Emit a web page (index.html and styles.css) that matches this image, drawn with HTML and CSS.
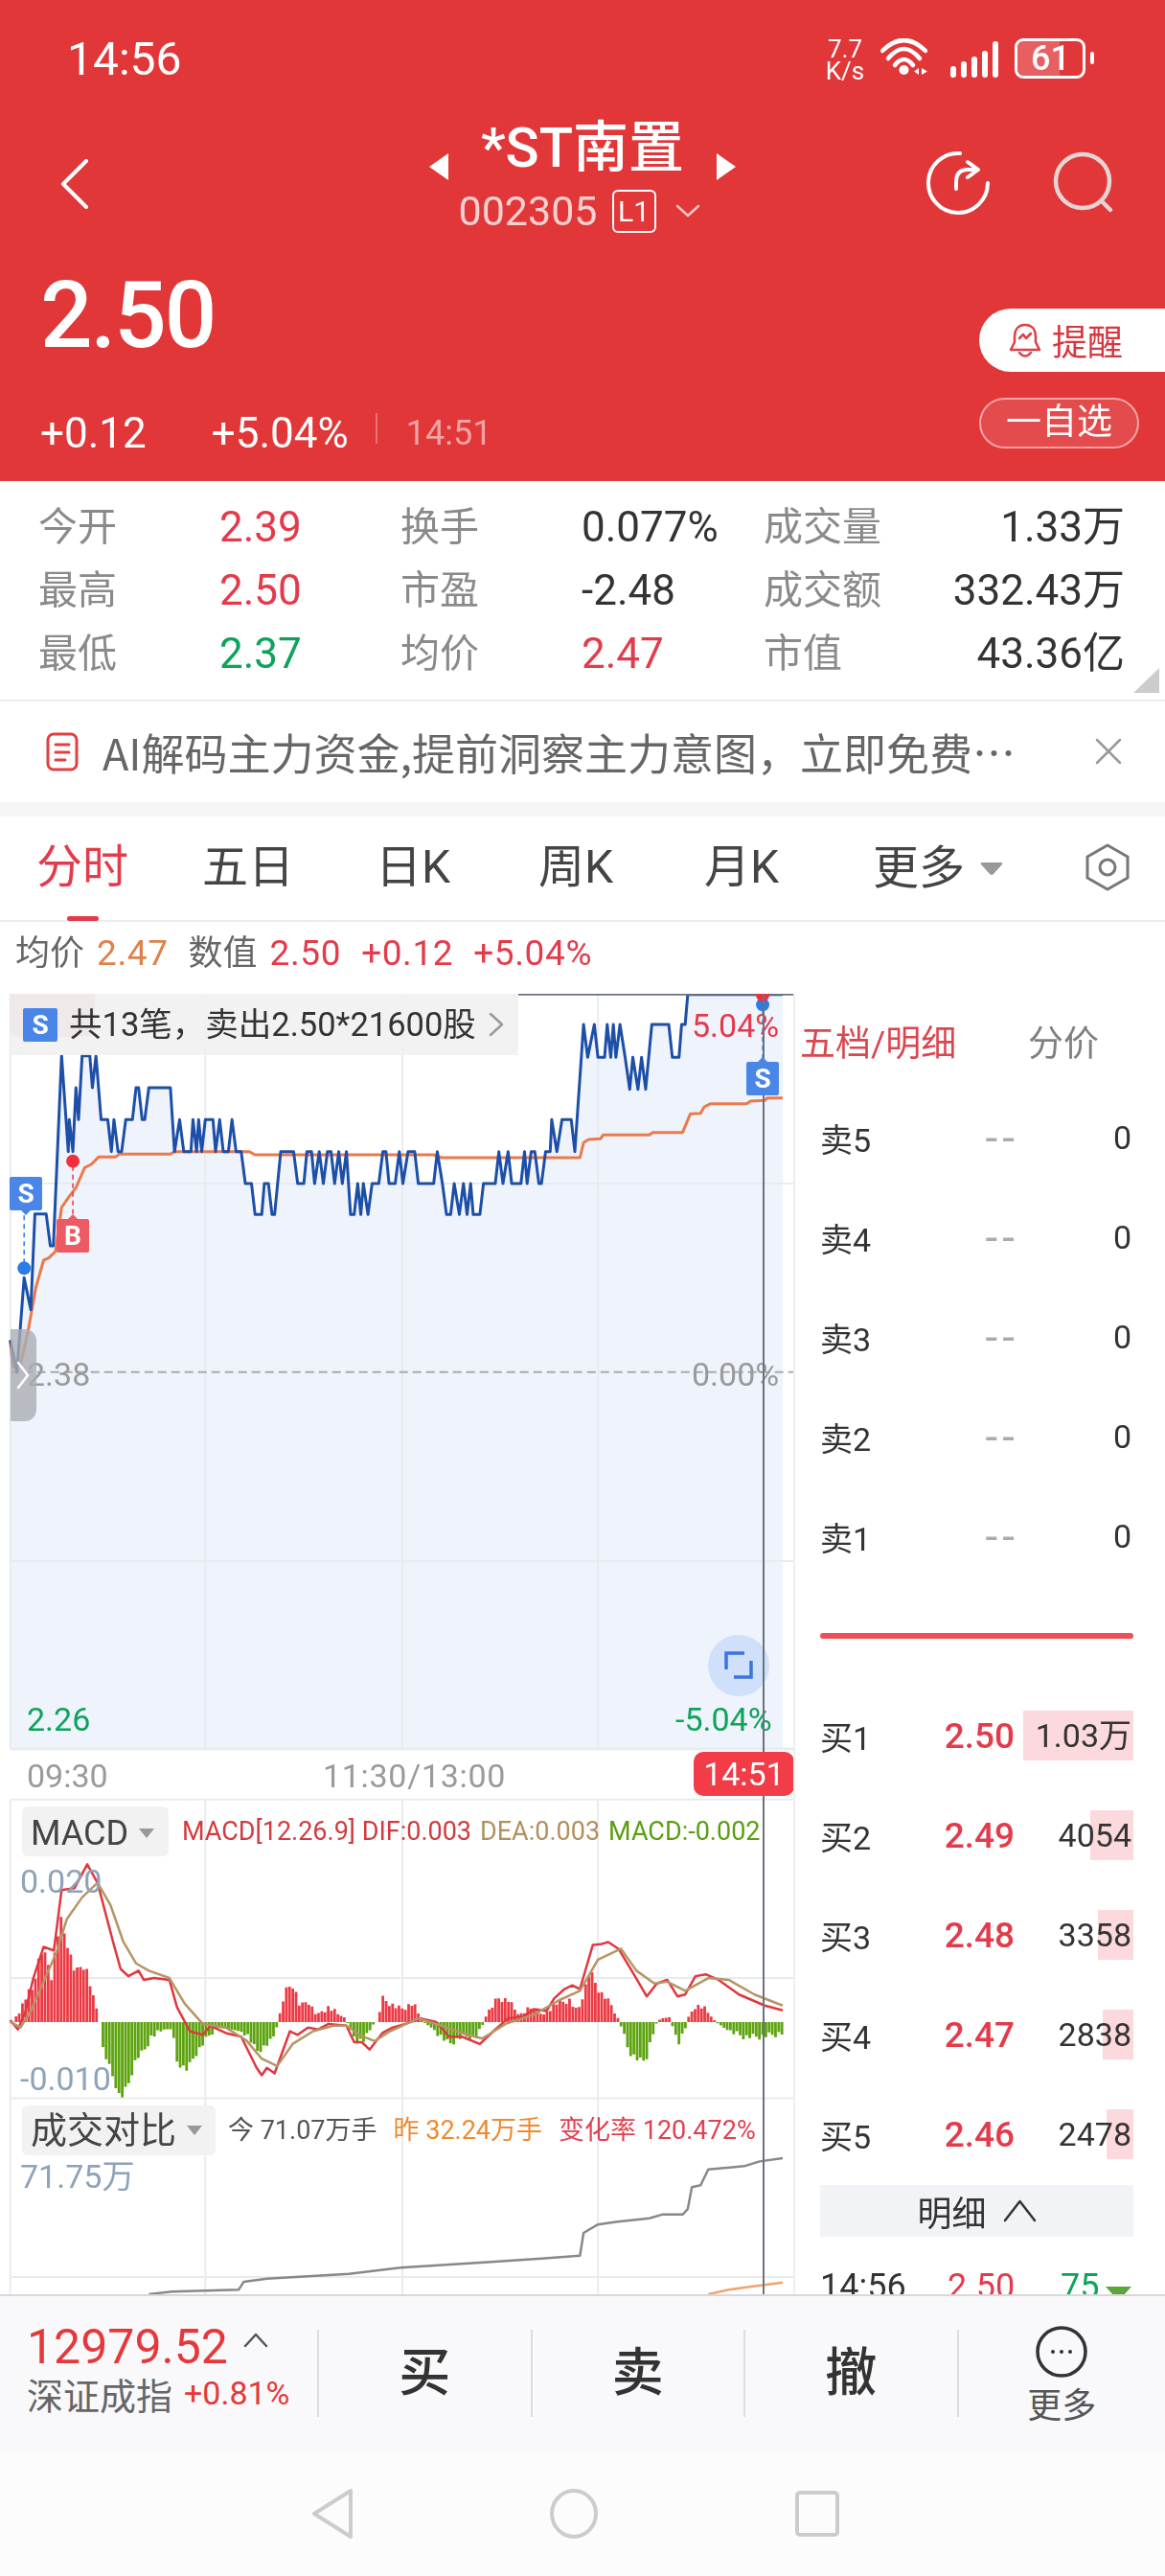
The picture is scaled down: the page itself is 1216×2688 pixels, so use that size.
FILE: index.html
```html
<!DOCTYPE html>
<html lang="zh-CN">
<head>
  <meta charset="UTF-8" />
  <meta name="viewport" content="width=device-width, initial-scale=1.0" />
  <title>*ST南置</title>
  <link rel="stylesheet" href="styles.css">
</head>
<body>
  <div class="page">
    <header class="top">
      <div class="status">
        <span class="clock">14:56</span>
        <div class="status-icons">
          <div class="speed"><span>7.7</span><span>K/s</span></div>
          <svg class="wifi" width="49" height="40" viewBox="0 0 49 40" fill="none" stroke="#fff" stroke-linecap="round">
            <path d="M2 13 Q24.500 -9 47 13" stroke-width="4.500"/>
            <path d="M8 21 Q24.500 1 41 21" stroke-width="4.500"/>
            <path d="M15 28 Q24.500 16 34 28" stroke-width="4.500"/>
            <circle cx="24.500" cy="33" r="5" fill="#fff" stroke="none"/>
            <path d="M40 31 L35 34.500 L40 38 Z M43 31 L49 34.500 L43 38 Z" fill="#fff" stroke="none"/>
          </svg>
          <div class="signal">
            <i class="s1"></i><i class="s2"></i><i class="s3"></i><i class="s4"></i><i class="s5"></i>
          </div>
          <div class="battery"><div class="battery-fill"></div><span>61</span></div>
          <div class="battery-cap"></div>
        </div>
      </div>

      <div class="titlebar">
        <svg class="back" width="30" height="52" viewBox="0 0 30 52" fill="none" stroke="#fff" stroke-width="4" stroke-linecap="round" stroke-linejoin="round">
          <path d="M27 2 L3 26 L27 50"/>
        </svg>
        <div class="title-block">
          <div class="title-line">
            <svg class="arrow" width="20" height="28" viewBox="0 0 20 28" fill="#fff"><path d="M20 0 V28 L0 14 Z"/></svg>
            <span class="name">*ST南置</span>
            <svg class="arrow" width="20" height="28" viewBox="0 0 20 28" fill="#fff"><path d="M0 0 V28 L20 14 Z"/></svg>
          </div>
          <div class="code-line">
            <span class="code">002305</span>
            <span class="level">L1</span>
            <svg width="26" height="14" viewBox="0 0 26 14" fill="none" stroke="#f5c4c4" stroke-width="2.500" stroke-linecap="round" stroke-linejoin="round"><path d="M2 2 L13 12 L24 2"/></svg>
          </div>
        </div>
        <div class="title-tools">
          <svg width="68" height="68" viewBox="0 0 68 68" fill="none" stroke="#fff" stroke-width="4" stroke-linecap="round" stroke-linejoin="round">
            <path d="M36 3 A31 31 0 1 0 65 34"/>
            <path d="M32 40 V33 Q32 20 44 20 L54 20"/>
            <path d="M44 12 L55 20 L44 28"/>
          </svg>
          <svg width="68" height="68" viewBox="0 0 68 68" fill="none" stroke="#e6d3d3" stroke-width="4.500" stroke-linecap="round">
            <circle cx="32" cy="32" r="28"/>
            <path d="M52 53 L61 62"/>
          </svg>
        </div>
      </div>

      <div class="quote">
        <div class="quote-left">
          <div class="price">2.50</div>
          <div class="change">
            <span class="change-abs">+0.12</span>
            <span class="change-pct">+5.04%</span>
            <span class="change-time">14:51</span>
          </div>
        </div>
        <div class="quote-right">
          <div class="remind">
            <svg width="34" height="37" viewBox="0 0 34 37" fill="none" stroke="#dc3f45" stroke-width="2.500" stroke-linecap="round" stroke-linejoin="round">
              <path d="M17 2 C9 2 6 8 6 14 V20 L2 28 H32 L28 20 V14 C28 8 25 2 17 2 Z"/>
              <path d="M11 31 Q17 38 23 31"/>
              <path d="M11 16 L15 12 L18 16 L23 11"/>
            </svg>
            <span>提醒</span>
          </div>
          <div class="watch">一自选</div>
        </div>
      </div>
    </header>

    <section class="stats">
      <span class="stat-label">今开</span><span class="stat-val up">2.39</span>
      <span class="stat-label">换手</span><span class="stat-val">0.077%</span>
      <span class="stat-label">成交量</span><span class="stat-val end">1.33万</span>
      <span class="stat-label">最高</span><span class="stat-val up">2.50</span>
      <span class="stat-label">市盈</span><span class="stat-val">-2.48</span>
      <span class="stat-label">成交额</span><span class="stat-val end">332.43万</span>
      <span class="stat-label">最低</span><span class="stat-val down">2.37</span>
      <span class="stat-label">均价</span><span class="stat-val up">2.47</span>
      <span class="stat-label">市值</span><span class="stat-val end">43.36亿</span>
      <div class="stats-corner"></div>
    </section>

    <section class="banner">
      <svg width="34" height="41" viewBox="0 0 34 41" fill="none" stroke="#e2403f" stroke-width="3" stroke-linecap="round">
        <rect x="2" y="2" width="30" height="37" rx="6"/>
        <path d="M10 13 H24 M10 21 H24 M10 29 H20"/>
      </svg>
      <span class="banner-text">AI解码主力资金,提前洞察主力意图，立即免费…</span>
      <svg class="banner-close" width="30" height="30" viewBox="0 0 30 30" fill="none" stroke="#999" stroke-width="2.500" stroke-linecap="round">
        <path d="M3 3 L27 27 M27 3 L3 27"/>
      </svg>
    </section>

    <nav class="tabs">
      <a class="tab tab-on">分时</a>
      <a class="tab">五日</a>
      <a class="tab">日K</a>
      <a class="tab">周K</a>
      <a class="tab">月K</a>
      <div class="tab-more">
        <a class="tab">更多</a>
        <svg width="24" height="15" viewBox="0 0 24 15" fill="#999"><path d="M2 1 H22 Q24 1 23 3 L14 13 Q12 15 10 13 L1 3 Q0 1 2 1 Z"/></svg>
        <svg class="tab-gear" width="46" height="50" viewBox="0 0 46 50" fill="none" stroke="#777" stroke-width="3" stroke-linejoin="round">
          <path d="M23 2 L44 14 V36 L23 48 L2 36 V14 Z"/>
          <circle cx="23" cy="25" r="8"/>
        </svg>
      </div>
    </nav>

    <div class="info">
      <span class="info-label">均价</span><span class="info-num info-avg">2.47</span>
      <span class="info-label info-gap">数值</span><span class="info-num up">2.50</span>
      <span class="info-num up info-gap">+0.12</span><span class="info-num up info-gap">+5.04%</span>
    </div>

    <main class="board">
      <div class="chart">
        <svg class="chart-lines" viewBox="0 111 1547.47 4071" preserveAspectRatio="none">
          <polygon id="priceFill" class="price-fill"></polygon>
          <g class="grid">
            <path d="M400 111 V2475 M784 111 V2475 M1165 111 V2475"/>
            <path d="M20 705 H1548 M20 1887 H1548"/>
            <path class="grid-mid" d="M20 1295 H1548"/>
            <path class="grid-base" d="M20 2475 H1548"/>
            <path d="M20 111 V2475 M1548 111 V2475"/>
          </g>
          <polyline id="avgLine" class="line line-avg"></polyline>
          <polyline id="priceLine" class="line line-price"></polyline>
          <path class="line line-top" d="M1010 113 H1548"/>
          <path class="tick tick-blue" d="M47 805 V955"/>
          <path class="tick tick-red" d="M142 650 V800"/>
          <path class="tick tick-blue" d="M1486 165 V325"/>
          <ellipse cx="47" cy="970" rx="13" ry="21" fill="#2b7be8"/>
          <ellipse cx="142" cy="635" rx="13" ry="21" fill="#f0303f"/>
          <ellipse cx="1486" cy="145" rx="13" ry="21" fill="#2b7be8"/>
          <ellipse cx="1486" cy="115" rx="13" ry="21" fill="#f0303f"/>

          <g transform="translate(0 2400) scale(1 1.148)">
            <g class="grid">
              <path d="M400 205 V1700 M784 205 V1700 M1165 205 V1700 M20 205 V1700 M1548 205 V1700"/>
              <path d="M20 203 H1548 M20 690 H1548 M20 1018 H1548 M20 1505 H1548"/>
            </g>
            <path id="barsUp" class="bars bars-up"></path>
            <path id="barsDown" class="bars bars-down"></path>
            <polyline id="difLine" class="line line-dif"></polyline>
            <polyline id="deaLine" class="line line-dea"></polyline>
            <polyline id="volLine" class="line line-vol"></polyline>
            <polyline id="volPrev" class="line line-prev"></polyline>
          </g>
        </svg>

        <div class="tip-shade"></div>
        <div class="tip">
          <span class="tip-s">S</span>
          <span class="tip-text">共13笔，卖出2.50*21600股</span>
          <svg width="16" height="26" viewBox="0 0 16 26" fill="none" stroke="#999" stroke-width="2.500" stroke-linecap="round" stroke-linejoin="round"><path d="M2 2 L14 13 L2 24"/></svg>
        </div>

        <span class="lab lab-pct lab-top up">5.04%</span>
        <span class="lab lab-left lab-mid muted">2.38</span>
        <span class="lab lab-pct lab-mid muted">0.00%</span>
        <span class="lab lab-left lab-low down">2.26</span>
        <span class="lab lab-pct-wide lab-low down">-5.04%</span>
        <span class="lab lab-left lab-time muted">09:30</span>
        <span class="lab lab-noon lab-time muted">11:30/13:00</span>

        <div class="handle">
          <svg width="14" height="30" viewBox="0 0 14 30" fill="none" stroke="#fff" stroke-width="2.500" stroke-linecap="round" stroke-linejoin="round"><path d="M2 2 L12 15 L2 28"/></svg>
        </div>
        <div class="expand">
          <svg width="32" height="30" viewBox="0 0 32 30" fill="none" stroke="#3b74e0" stroke-width="3.500"><path d="M22 2 H3 V19 M29 10 V27 H11"/></svg>
        </div>

        <div class="cross"></div>
        <span class="mark mark-s mark-left">S</span>
        <span class="mark mark-b mark-buy">B</span>
        <span class="mark mark-s mark-right">S</span>
        <div class="time-badge">14:51</div>

        <div class="pick pick-macd">MACD<i class="pick-tri"></i></div>
        <div class="legend legend-macd">
          <span class="c-dif">MACD[12.26.9] DIF:0.003</span>
          <span class="c-dea">DEA:0.003</span>
          <span class="c-bar">MACD:-0.002</span>
        </div>
        <span class="lab lab-axis lab-macd-hi">0.020</span>
        <span class="lab lab-axis lab-macd-lo">-0.010</span>

        <div class="pick pick-vol">成交对比<i class="pick-tri"></i></div>
        <div class="legend legend-vol">
          <span class="c-today">今 71.07万手</span>
          <span class="c-prev">昨 32.24万手</span>
          <span class="c-rate">变化率 120.472%</span>
        </div>
        <span class="lab lab-axis lab-vol-hi">71.75万</span>
      </div>

      <aside class="depth">
        <div class="depth-head"><span class="depth-on">五档/明细</span><span class="depth-off">分价</span></div>
        <div class="row"><span>卖5</span><span class="dash">--</span><span class="vol">0</span></div>
        <div class="row"><span>卖4</span><span class="dash">--</span><span class="vol">0</span></div>
        <div class="row"><span>卖3</span><span class="dash">--</span><span class="vol">0</span></div>
        <div class="row"><span>卖2</span><span class="dash">--</span><span class="vol">0</span></div>
        <div class="row"><span>卖1</span><span class="dash">--</span><span class="vol">0</span></div>
        <div class="row-line"><div></div></div>
        <div class="row"><span>买1</span><span class="bid up">2.50</span><span class="vol"><i class="vol-bar" style="width:100%"></i><b>1.03万</b></span></div>
        <div class="row"><span>买2</span><span class="bid up">2.49</span><span class="vol"><i class="vol-bar" style="width:39%"></i><b>4054</b></span></div>
        <div class="row"><span>买3</span><span class="bid up">2.48</span><span class="vol"><i class="vol-bar" style="width:32%"></i><b>3358</b></span></div>
        <div class="row"><span>买4</span><span class="bid up">2.47</span><span class="vol"><i class="vol-bar" style="width:28%"></i><b>2838</b></span></div>
        <div class="row"><span>买5</span><span class="bid up">2.46</span><span class="vol"><i class="vol-bar" style="width:24%"></i><b>2478</b></span></div>
        <div class="detail-btn">
          <span>明细</span>
          <svg width="35" height="24" viewBox="0 0 35 24" fill="none" stroke="#333" stroke-width="2.500" stroke-linecap="round" stroke-linejoin="round"><path d="M2 22 L17.500 2 L33 22"/></svg>
        </div>
        <div class="tick-row">
          <span>14:56</span><span class="up">2.50</span><span class="down">75</span>
          <svg width="27" height="15" viewBox="0 0 27 15" fill="#5aa63c"><path d="M0 0 H27 L13.500 15 Z"/></svg>
        </div>
      </aside>
    </main>

    <footer class="bottom">
      <div class="index">
        <div class="index-top">
          <span class="index-val">12979.52</span>
          <svg width="26" height="16" viewBox="0 0 26 16" fill="none" stroke="#555" stroke-width="2.500" stroke-linecap="round" stroke-linejoin="round"><path d="M2 14 L13 2 L24 14"/></svg>
        </div>
        <div class="index-sub"><span class="index-name">深证成指</span><span class="index-pct">+0.81%</span></div>
      </div>
      <div class="action">买</div>
      <div class="action">卖</div>
      <div class="action">撤</div>
      <div class="more">
        <svg width="54" height="54" viewBox="0 0 54 54" fill="none" stroke="#333" stroke-width="3.500">
          <circle cx="27" cy="27" r="25"/>
          <circle cx="18" cy="27" r="2" fill="#333" stroke="none"/>
          <circle cx="27" cy="27" r="2" fill="#333" stroke="none"/>
          <circle cx="36" cy="27" r="2" fill="#333" stroke="none"/>
        </svg>
        <span>更多</span>
      </div>
    </footer>

    <div class="navbar">
      <svg width="42" height="52" viewBox="0 0 42 52" fill="none" stroke="#ccc" stroke-width="4" stroke-linejoin="round"><path d="M40 2 V50 L2 26 Z"/></svg>
      <svg width="50" height="52" viewBox="0 0 50 52" fill="none" stroke="#ccc" stroke-width="4"><ellipse cx="25" cy="26" rx="23" ry="24"/></svg>
      <svg width="46" height="48" viewBox="0 0 46 48" fill="none" stroke="#ccc" stroke-width="4"><rect x="2" y="2" width="42" height="44" rx="3"/></svg>
    </div>
  </div>

  <script src="chart.js"></script>
</body>
</html>
```

FILE: styles.css
```css
* {
  box-sizing: border-box;
  margin: 0;
  padding: 0;
}

body {
  background-color: #fff;
  font-family: Roboto, "Noto Sans CJK SC", sans-serif;
  color: #333;
}

svg {
  display: block;
  flex: none;
}

.page {
  width: 1216px;
  height: 2688px;
  overflow: hidden;
  display: flex;
  flex-direction: column;
}

.up { color: #e33b4b; }
.down { color: #0fa35a; }
.muted { color: #9a9a9a; }

/* red header */
.top {
  height: 502px;
  flex: none;
  background-color: #e13739;
  color: #fff;
}

.status {
  height: 124px;
  display: flex;
  justify-content: space-between;
  align-items: center;
  padding: 0 74px 0 70px;
}

.clock {
  font-size: 48px;
  line-height: 60px;
}

.status-icons {
  display: flex;
  align-items: flex-start;
  height: 44px;
}

.speed {
  display: flex;
  flex-direction: column;
  align-items: center;
  width: 40px;
  font-size: 26px;
  line-height: 23px;
  margin-right: 17px;
}

.wifi {
  margin-right: 24px;
}

.signal {
  display: flex;
  align-items: flex-end;
  gap: 5px;
  height: 39px;
  margin-top: 2px;
  margin-right: 17px;
}

.signal i {
  display: block;
  width: 6px;
  border-radius: 3px;
  background-color: #fff;
}

.s1 { height: 12px; }
.s2 { height: 17px; }
.s3 { height: 22px; }
.s4 { height: 28px; }
.s5 { height: 38px; }

.battery {
  position: relative;
  width: 74px;
  height: 42px;
  border: 3px solid #fff;
  border-radius: 9px;
  display: flex;
  align-items: center;
  overflow: hidden;
}

.battery span {
  position: relative;
  margin-left: 14px;
  font-size: 36px;
  font-weight: 500;
  line-height: 36px;
}

.battery-fill {
  position: absolute;
  left: 0;
  top: 0;
  bottom: 0;
  width: 65%;
  background-color: rgba(255, 255, 255, 0.2);
}

.battery-cap {
  width: 4px;
  height: 13px;
  margin: 14px 0 0 5px;
  border-radius: 2px;
  background-color: #fff;
}

.titlebar {
  position: relative;
  height: 128px;
  display: flex;
  justify-content: center;
}

.back {
  position: absolute;
  left: 63px;
  top: 42px;
}

.title-block {
  display: flex;
  flex-direction: column;
  align-items: center;
}

.title-line {
  display: flex;
  gap: 34px;
  height: 60px;
}

.title-line .arrow {
  align-self: flex-end;
  margin-bottom: -4px;
}

.name {
  font-size: 58px;
  line-height: 60px;
  font-weight: 500;
}

.code-line {
  display: flex;
  align-items: center;
  height: 48px;
  margin-top: 12px;
  margin-right: 7px;
}

.code {
  font-size: 43px;
  line-height: 48px;
  color: #f8d0d0;
}

.level {
  width: 46px;
  height: 45px;
  margin: 0 20px 0 15px;
  border: 2px solid #fff;
  border-radius: 6px;
  font-size: 30px;
  line-height: 41px;
  text-align: center;
}

.title-tools {
  position: absolute;
  left: 966px;
  top: 33px;
  display: flex;
  gap: 64px;
}

.quote {
  height: 250px;
  display: flex;
  justify-content: space-between;
}

.quote-left {
  padding: 32px 0 0 42px;
}

.price {
  font-size: 96px;
  line-height: 90px;
  font-weight: 500;
  letter-spacing: -2px;
}

.change {
  display: flex;
  align-items: center;
  height: 50px;
  margin-top: 53px;
  font-size: 44px;
  line-height: 50px;
}

.change-pct {
  margin-left: 68px;
  padding-right: 30px;
  margin-right: 30px;
  position: relative;
}

.change-pct::after {
  content: "";
  position: absolute;
  right: 0;
  top: 4px;
  height: 32px;
  width: 2px;
  background-color: rgba(255, 255, 255, 0.3);
}

.change-time {
  font-size: 36px;
  color: #f4a3a3;
}

.quote-right {
  width: 194px;
  padding-top: 70px;
}

.remind {
  height: 66px;
  padding-left: 31px;
  display: flex;
  align-items: center;
  gap: 11px;
  background-color: #fff;
  border-radius: 33px 0 0 33px;
  color: #d8363e;
  font-size: 37px;
}

.watch {
  width: 167px;
  height: 53px;
  margin-top: 27px;
  border: 2px solid rgba(255, 255, 255, 0.5);
  border-radius: 27px;
  background-color: rgba(255, 255, 255, 0.1);
  font-size: 37px;
  line-height: 47px;
  text-align: center;
}

/* quote numbers */
.stats {
  position: relative;
  height: 230px;
  flex: none;
  padding: 15px 42px 0 40px;
  border-bottom: 2px solid #ececec;
  display: grid;
  grid-template-columns: 189px 189px 189px 190px 1fr auto;
  grid-template-rows: 66px 66px 66px;
  align-items: center;
}

.stat-label {
  font-size: 41px;
  line-height: 50px;
  color: #8a8a8a;
}

.stat-val {
  font-size: 44px;
  line-height: 50px;
}

.stat-val.end {
  text-align: right;
  color: #333;
}

.stats-corner {
  position: absolute;
  right: 6px;
  bottom: 7px;
  border-left: 27px solid transparent;
  border-bottom: 26px solid #ccc;
}

.banner {
  position: relative;
  height: 105px;
  flex: none;
  display: flex;
  align-items: center;
  padding-left: 48px;
}

.banner-text {
  margin-left: 25px;
  font-family: "Noto Sans CJK SC", sans-serif;
  font-size: 45px;
  line-height: 56px;
  color: #666;
  white-space: nowrap;
}

.banner-close {
  position: absolute;
  left: 1142px;
  top: 37px;
}

/* chart tabs */
.tabs {
  height: 110px;
  flex: none;
  margin-top: 15px;
  border-bottom: 2px solid #ececec;
  padding-left: 38px;
  display: grid;
  grid-template-columns: 173px 181px 170px 173px 176px 1fr;
  position: relative;
}

.tabs::before {
  content: "";
  position: absolute;
  left: 0;
  right: 0;
  top: -15px;
  height: 15px;
  background-color: #f5f5f6;
}

.tab {
  font-size: 48px;
  line-height: 106px;
  color: #444;
}

.tab-on {
  position: relative;
  color: #e33b4b;
}

.tab-on::after {
  content: "";
  position: absolute;
  left: 32px;
  bottom: -1px;
  width: 33px;
  height: 5px;
  border-radius: 3px;
  background-color: #e33b4b;
}

.tab-more {
  display: flex;
  align-items: center;
  gap: 16px;
  padding-right: 37px;
}

.tab-gear {
  margin-left: auto;
  margin-top: -2px;
}

.info {
  height: 75px;
  flex: none;
  padding: 0 0 9px 16px;
  display: flex;
  align-items: center;
  font-size: 36px;
  line-height: 44px;
}

.info-label {
  color: #666;
  margin-right: 13px;
}

.info-num {
  font-size: 37px;
  letter-spacing: 0.6px;
}

.info-avg {
  color: #df824a;
}

.info-gap {
  margin-left: 21px;
}

/* chart column and order book */
.board {
  height: 1357px;
  flex: none;
  display: flex;
}

.chart {
  position: relative;
  width: 829px;
  height: 1357px;
  flex: none;
  overflow: hidden;
}

.chart-lines {
  position: absolute;
  left: 0;
  top: 0;
  width: 829px;
  height: 1357px;
}

.price-fill { fill: #eef3fc; }

.grid path {
  fill: none;
  stroke: #e8ebf0;
  stroke-width: 2px;
  vector-effect: non-scaling-stroke;
}

.grid .grid-mid {
  stroke: #aaa;
  stroke-dasharray: 9 5;
}

.grid .grid-base {
  stroke-width: 3px;
}

.line {
  fill: none;
  stroke-linejoin: round;
  vector-effect: non-scaling-stroke;
}

.line-price { stroke: #1d4fa8; stroke-width: 3px; }
.line-avg { stroke: #ea7a4c; stroke-width: 3px; }
.line-top { stroke: #6b7280; stroke-width: 2px; }
.line-dif { stroke: #e1373f; stroke-width: 2.5px; }
.line-dea { stroke: #b59565; stroke-width: 2.5px; }
.line-vol { stroke: #888; stroke-width: 2.5px; }
.line-prev { stroke: #f0a46a; stroke-width: 2.5px; }

.tick {
  fill: none;
  stroke-width: 1.5px;
  stroke-dasharray: 5 4;
  vector-effect: non-scaling-stroke;
}

.tick-blue { stroke: #2b7be8; }
.tick-red { stroke: #f0303f; }

.bars {
  fill: none;
  stroke-width: 2.8px;
  vector-effect: non-scaling-stroke;
}

.bars-up { stroke: #ec3a44; }
.bars-down { stroke: #5da30f; }

.tip-shade {
  position: absolute;
  left: 11px;
  top: 0;
  width: 88px;
  height: 45px;
  border-radius: 0 0 8px 8px;
  background-color: #e9b7b7;
}

.tip {
  position: absolute;
  left: 11px;
  top: 0;
  width: 530px;
  height: 64px;
  padding-left: 13px;
  display: flex;
  align-items: center;
  background-color: rgba(240, 240, 240, 0.88);
}

.tip-s {
  width: 36px;
  height: 35px;
  margin-right: 12px;
  border-radius: 2px;
  background-color: #4a86e8;
  color: #fff;
  font-size: 28px;
  font-weight: 700;
  line-height: 35px;
  text-align: center;
}

.tip-text {
  font-size: 34.5px;
  line-height: 44px;
  white-space: nowrap;
  color: #333;
}

.tip svg {
  margin-left: 13px;
}

.lab {
  position: absolute;
  font-size: 34px;
  line-height: 40px;
  white-space: nowrap;
}

.lab-left { left: 28px; }
.lab-pct { left: 722px; }
.lab-pct-wide { left: 705px; }
.lab-top { top: 13px; }
.lab-mid { top: 377px; }
.lab-low { top: 737px; }
.lab-time { top: 796px; }
.lab-noon { left: 337px; letter-spacing: 0.7px; }

.lab-axis {
  left: 21px;
  color: #8ea3b8;
}

.lab-macd-hi { top: 906px; }
.lab-macd-lo { top: 1112px; }
.lab-vol-hi { top: 1214px; }

.handle {
  position: absolute;
  left: 11px;
  top: 350px;
  width: 27px;
  height: 96px;
  padding-left: 6px;
  display: flex;
  align-items: center;
  border-radius: 0 12px 12px 0;
  background-color: rgba(170, 172, 178, 0.8);
}

.expand {
  position: absolute;
  left: 739px;
  top: 669px;
  width: 64px;
  height: 64px;
  display: flex;
  align-items: center;
  justify-content: center;
  border-radius: 50%;
  background-color: #d0dffa;
}

.cross {
  position: absolute;
  left: 796px;
  top: 0;
  bottom: 0;
  width: 2px;
  background-color: #6b7280;
}

.mark {
  position: absolute;
  width: 34px;
  height: 35px;
  border-radius: 2px;
  color: #fff;
  font-size: 28px;
  font-weight: 700;
  line-height: 35px;
  text-align: center;
}

.mark::after {
  content: "";
  position: absolute;
  left: 12px;
  border-left: 5px solid transparent;
  border-right: 5px solid transparent;
}

.mark-s { background-color: #4a86e8; }
.mark-b { background-color: #ee5a63; }

.mark-left {
  left: 10px;
  top: 191px;
}

.mark-left::after {
  top: 35px;
  border-top: 5px solid #4a86e8;
}

.mark-buy {
  left: 59px;
  top: 235px;
}

.mark-buy::after {
  top: -5px;
  border-bottom: 5px solid #ee5a63;
}

.mark-right {
  left: 779px;
  top: 71px;
}

.mark-right::after {
  top: -5px;
  border-bottom: 5px solid #4a86e8;
}

.time-badge {
  position: absolute;
  left: 724px;
  top: 791px;
  width: 105px;
  height: 46px;
  border-radius: 10px;
  background-color: #f23c48;
  color: #fff;
  font-size: 34px;
  line-height: 46px;
  text-align: center;
}

.pick {
  position: absolute;
  left: 23px;
  height: 52px;
  padding-left: 9px;
  display: flex;
  align-items: center;
  border-radius: 6px;
  background-color: #f2f2f2;
  color: #444;
  line-height: 52px;
}

.pick-macd {
  top: 848px;
  width: 153px;
  padding-top: 3px;
  font-size: 36px;
}

.pick-vol {
  top: 1160px;
  width: 202px;
  font-size: 38px;
}

.pick-tri {
  margin-left: 11px;
  border-left: 8px solid transparent;
  border-right: 8px solid transparent;
  border-top: 10px solid #999;
}

.legend {
  position: absolute;
  display: flex;
  line-height: 40px;
  white-space: nowrap;
}

.legend-macd {
  left: 190px;
  top: 854px;
  gap: 9px;
  font-size: 27px;
}

.legend-vol {
  left: 238px;
  top: 1166px;
  gap: 17px;
  font-size: 27px;
}

.c-dif { color: #d13a3f; }
.c-dea { color: #b09060; }
.c-bar { color: #5a9e10; }
.c-today { color: #555; }
.c-prev { color: #ee8a30; }
.c-rate { color: #e04050; }

.depth {
  flex: 1;
  min-width: 0;
  margin-left: -1px;
  padding: 0 33px 0 26px;
  border-left: 2px solid #eee;
  position: relative;
  background-color: #fff;
  font-size: 34px;
}

.depth-head {
  height: 98px;
  margin-left: -21px;
  display: flex;
  align-items: center;
  font-size: 37px;
}

.depth-on {
  color: #d9474f;
  width: 238px;
}

.depth-off {
  color: #808080;
}

.row {
  height: 104px;
  display: grid;
  grid-template-columns: 1fr auto 115px;
  column-gap: 9px;
  align-items: center;
  color: #333;
}

.dash {
  color: #aaa;
  font-size: 46px;
  letter-spacing: 5px;
  line-height: 52px;
  margin-right: -5px;
}

.bid {
  font-size: 37px;
  font-weight: 500;
}

.vol {
  position: relative;
  height: 52px;
  padding-right: 2px;
  text-align: right;
  line-height: 52px;
}

.vol b {
  position: relative;
  font-weight: 400;
}

.vol-bar {
  position: absolute;
  right: 0;
  top: 0;
  height: 52px;
  background-color: #fbd9dc;
  mix-blend-mode: multiply;
}

.row-line {
  height: 104px;
  display: flex;
  align-items: center;
}

.row-line div {
  width: 100%;
  height: 6px;
  border-radius: 3px;
  background-color: #ef4f55;
}

.detail-btn {
  height: 54px;
  margin-top: 1px;
  display: flex;
  align-items: center;
  justify-content: center;
  gap: 17px;
  background-color: #f2f3f7;
  font-size: 36px;
}

.tick-row {
  height: 52px;
  margin-top: 26px;
  display: grid;
  grid-template-columns: 133px 118px 47px 1fr;
  align-items: center;
  font-size: 36px;
  color: #333;
}

.tick-row svg {
  margin-top: 14px;
}

/* bottom trade bar */
.bottom {
  height: 164px;
  flex: none;
  padding-top: 35px;
  border-top: 2px solid #d8d8d8;
  background-color: #f9f9fc;
  display: flex;
  position: relative;
}

.index {
  width: 331px;
  height: 91px;
  padding-left: 28px;
}

.index-top {
  display: flex;
  align-items: center;
  height: 44px;
  margin-top: -4px;
}

.index-val {
  font-size: 50px;
  line-height: 44px;
  color: #e6383a;
}

.index-top svg {
  margin: -14px 0 0 16px;
}

.index-sub {
  display: flex;
  align-items: center;
  height: 44px;
  margin-top: 4px;
}

.index-name {
  font-size: 38px;
  color: #666;
}

.index-pct {
  margin-left: 12px;
  font-size: 34px;
  color: #e6383a;
}

.action {
  width: 222.5px;
  height: 91px;
  border-left: 2px solid #ddd;
  font-size: 54px;
  font-weight: 500;
  line-height: 91px;
  text-align: center;
  color: #333;
}

.more {
  flex: 1;
  height: 91px;
  border-left: 2px solid #ddd;
  display: flex;
  flex-direction: column;
  align-items: center;
}

.more svg {
  margin-top: -4px;
}

.more span {
  margin-top: 10px;
  font-size: 36px;
  line-height: 40px;
  color: #555;
}

.navbar {
  height: 130px;
  flex: none;
  background-color: #fcfcfc;
  display: flex;
  align-items: center;
  justify-content: center;
  gap: 206px;
  padding-right: 14px;
}
```

FILE: chart.js
```js
// all coordinates are chart units: 1568 across per 840px, 3 per 1px down

const price = [[20,1195],[33,1295],[47,1000],[60,1100],[68,800],[90,800],[98,900],[104,900],[120,305],[133,605],[135,505],[142,605],[148,405],[153,505],[160,305],[175,305],[180,405],[187,305],[197,505],[210,505],[217,605],[222,505],[230,605],[237,605],[245,505],[258,505],[265,405],[270,405],[277,505],[282,505],[290,405],[332,405],[340,605],[350,505],[358,605],[372,605],[376,505],[383,605],[387,505],[393,605],[400,505],[415,505],[420,605],[428,505],[435,605],[445,605],[452,505],[460,605],[470,605],[478,705],[490,705],[497,802],[510,802],[515,705],[523,705],[530,802],[535,802],[547,605],[572,605],[580,705],[592,705],[598,605],[607,605],[613,705],[622,605],[630,705],[638,605],[645,605],[652,705],[660,605],[667,705],[675,605],[683,802],[690,802],[697,705],[703,802],[708,705],[717,802],[725,705],[738,705],[746,605],[752,605],[758,705],[770,705],[778,605],[785,705],[795,605],[808,605],[815,705],[845,705],[852,605],[862,705],[870,802],[878,802],[885,705],[895,802],[903,705],[910,802],[917,705],[922,802],[935,802],[942,705],[965,705],[972,605],[980,705],[990,605],[997,705],[1015,705],[1022,605],[1027,705],[1035,605],[1042,605],[1050,705],[1055,705],[1063,605],[1072,605],[1075,505],[1085,605],[1095,505],[1113,505],[1120,605],[1137,207],[1145,310],[1158,207],[1165,310],[1178,310],[1183,207],[1190,310],[1195,207],[1200,310],[1208,207],[1218,310],[1227,410],[1233,310],[1243,410],[1250,310],[1258,410],[1270,207],[1303,207],[1310,310],[1323,310],[1328,207],[1335,207],[1340,113],[1525,113]];

const avg = [[20,1195],[25,1280],[40,1270],[55,1165],[70,1030],[85,945],[95,938],[108,918],[120,780],[135,745],[148,718],[165,655],[178,645],[192,622],[225,622],[232,613],[332,613],[340,605],[485,605],[497,615],[845,615],[860,624],[1130,624],[1137,577],[1147,567],[1170,565],[1175,553],[1265,553],[1272,545],[1330,545],[1345,487],[1365,485],[1372,465],[1385,455],[1455,455],[1462,447],[1490,445],[1495,437],[1525,437]];

const dif = [[20,805],[35,830],[50,780],[65,690],[85,605],[105,615],[120,450],[145,445],[170,380],[190,430],[205,510],[220,590],[235,665],[250,685],[270,670],[280,695],[300,690],[330,695],[345,770],[370,835],[395,845],[410,820],[440,840],[470,850],[500,935],[510,955],[520,935],[535,950],[565,835],[580,845],[600,825],[620,830],[640,815],[675,820],[690,865],[705,865],[720,885],[745,840],[765,825],[790,815],[820,800],[850,810],[875,850],[900,850],[935,870],[965,830],[990,800],[1020,795],[1040,775],[1065,780],[1080,745],[1100,720],[1115,710],[1130,720],[1155,600],[1170,598],[1185,592],[1205,610],[1235,680],[1260,740],[1280,705],[1300,695],[1320,740],[1335,735],[1355,685],[1375,680],[1400,695],[1440,735],[1490,765],[1525,778]];

const dea = [[20,810],[40,825],[60,780],[85,700],[110,620],[130,530],[160,470],[190,430],[215,490],[240,590],[265,650],[290,670],[330,690],[360,760],[395,815],[440,825],[480,860],[510,910],[540,930],[570,870],[610,835],[650,820],[675,820],[700,845],[730,862],[760,835],[815,800],[860,820],[900,840],[940,855],[985,815],[1040,790],[1090,750],[1130,725],[1165,640],[1210,610],[1240,670],[1275,705],[1300,700],[1335,725],[1380,690],[1420,695],[1470,735],[1525,765]];

const vol = [[290,1552],[335,1545],[465,1540],[475,1518],[520,1510],[680,1497],[780,1480],[950,1465],[1055,1455],[1130,1447],[1137,1385],[1165,1362],[1200,1355],[1265,1345],[1290,1335],[1330,1335],[1340,1320],[1348,1260],[1365,1255],[1380,1212],[1450,1203],[1480,1190],[1525,1181]];

const volPrev = [[1380,1552],[1420,1540],[1460,1532],[1525,1520]];

// outline of the MACD histogram, 810 is the zero line
const hist = [[25,810],[45,760],[55,730],[65,720],[72,655],[80,620],[90,630],[100,690],[110,590],[120,525],[128,590],[135,610],[143,665],[150,670],[160,655],[170,670],[180,740],[187,760],[191,810],[195,810],[200,880],[215,940],[235,1020],[250,980],[265,910],[280,890],[295,850],[320,830],[335,830],[345,920],[365,940],[380,900],[400,860],[420,825],[450,830],[480,840],[500,890],[512,880],[530,860],[543,810],[547,770],[560,715],[572,710],[585,770],[600,750],[615,790],[640,770],[660,790],[675,800],[680,830],[695,860],[710,860],[730,810],[735,810],[745,745],[760,760],[780,775],[805,760],[820,800],[825,810],[845,830],[875,870],[900,850],[930,850],[943,810],[948,790],[970,745],[990,750],[1010,790],[1040,770],[1060,790],[1080,760],[1110,750],[1125,785],[1150,670],[1165,720],[1180,745],[1195,770],[1207,810],[1212,830],[1225,890],[1245,915],[1258,915],[1270,850],[1280,810],[1288,800],[1305,797],[1308,810],[1310,820],[1322,865],[1335,830],[1338,810],[1340,800],[1355,765],[1370,770],[1395,810],[1400,815],[1420,835],[1450,850],[1480,850],[1525,840]];

function toPoints(list) {
  return list.map(p => p.join(',')).join(' ');
}

function histAt(x) {
  for (let i = 1; i < hist.length; i++) {
    if (x <= hist[i][0]) {
      const [x0, y0] = hist[i - 1];
      const [x1, y1] = hist[i];
      return y0 + (y1 - y0) * (x - x0) / (x1 - x0);
    }
  }
  return 810;
}

document.getElementById('priceLine').setAttribute('points', toPoints(price));
document.getElementById('priceFill').setAttribute('points', toPoints(price) + ' 1525,2475 20,2475');
document.getElementById('avgLine').setAttribute('points', toPoints(avg));
document.getElementById('difLine').setAttribute('points', toPoints(dif));
document.getElementById('deaLine').setAttribute('points', toPoints(dea));
document.getElementById('volLine').setAttribute('points', toPoints(vol));
document.getElementById('volPrev').setAttribute('points', toPoints(volPrev));

let up = '';
let down = '';
let n = 0;
for (let x = 25; x <= 1525; x += 6.27) {
  let y = histAt(x);
  // a little roughness, the real bars are not a smooth curve
  if (Math.abs(y - 810) > 25) y += ((n * 7) % 5 - 2) * 4;
  if (y < 810) up += `M${x.toFixed(1)} 810V${y.toFixed(1)}`;
  if (y > 810) down += `M${x.toFixed(1)} 810V${y.toFixed(1)}`;
  n++;
}
document.getElementById('barsUp').setAttribute('d', up);
document.getElementById('barsDown').setAttribute('d', down);
```
